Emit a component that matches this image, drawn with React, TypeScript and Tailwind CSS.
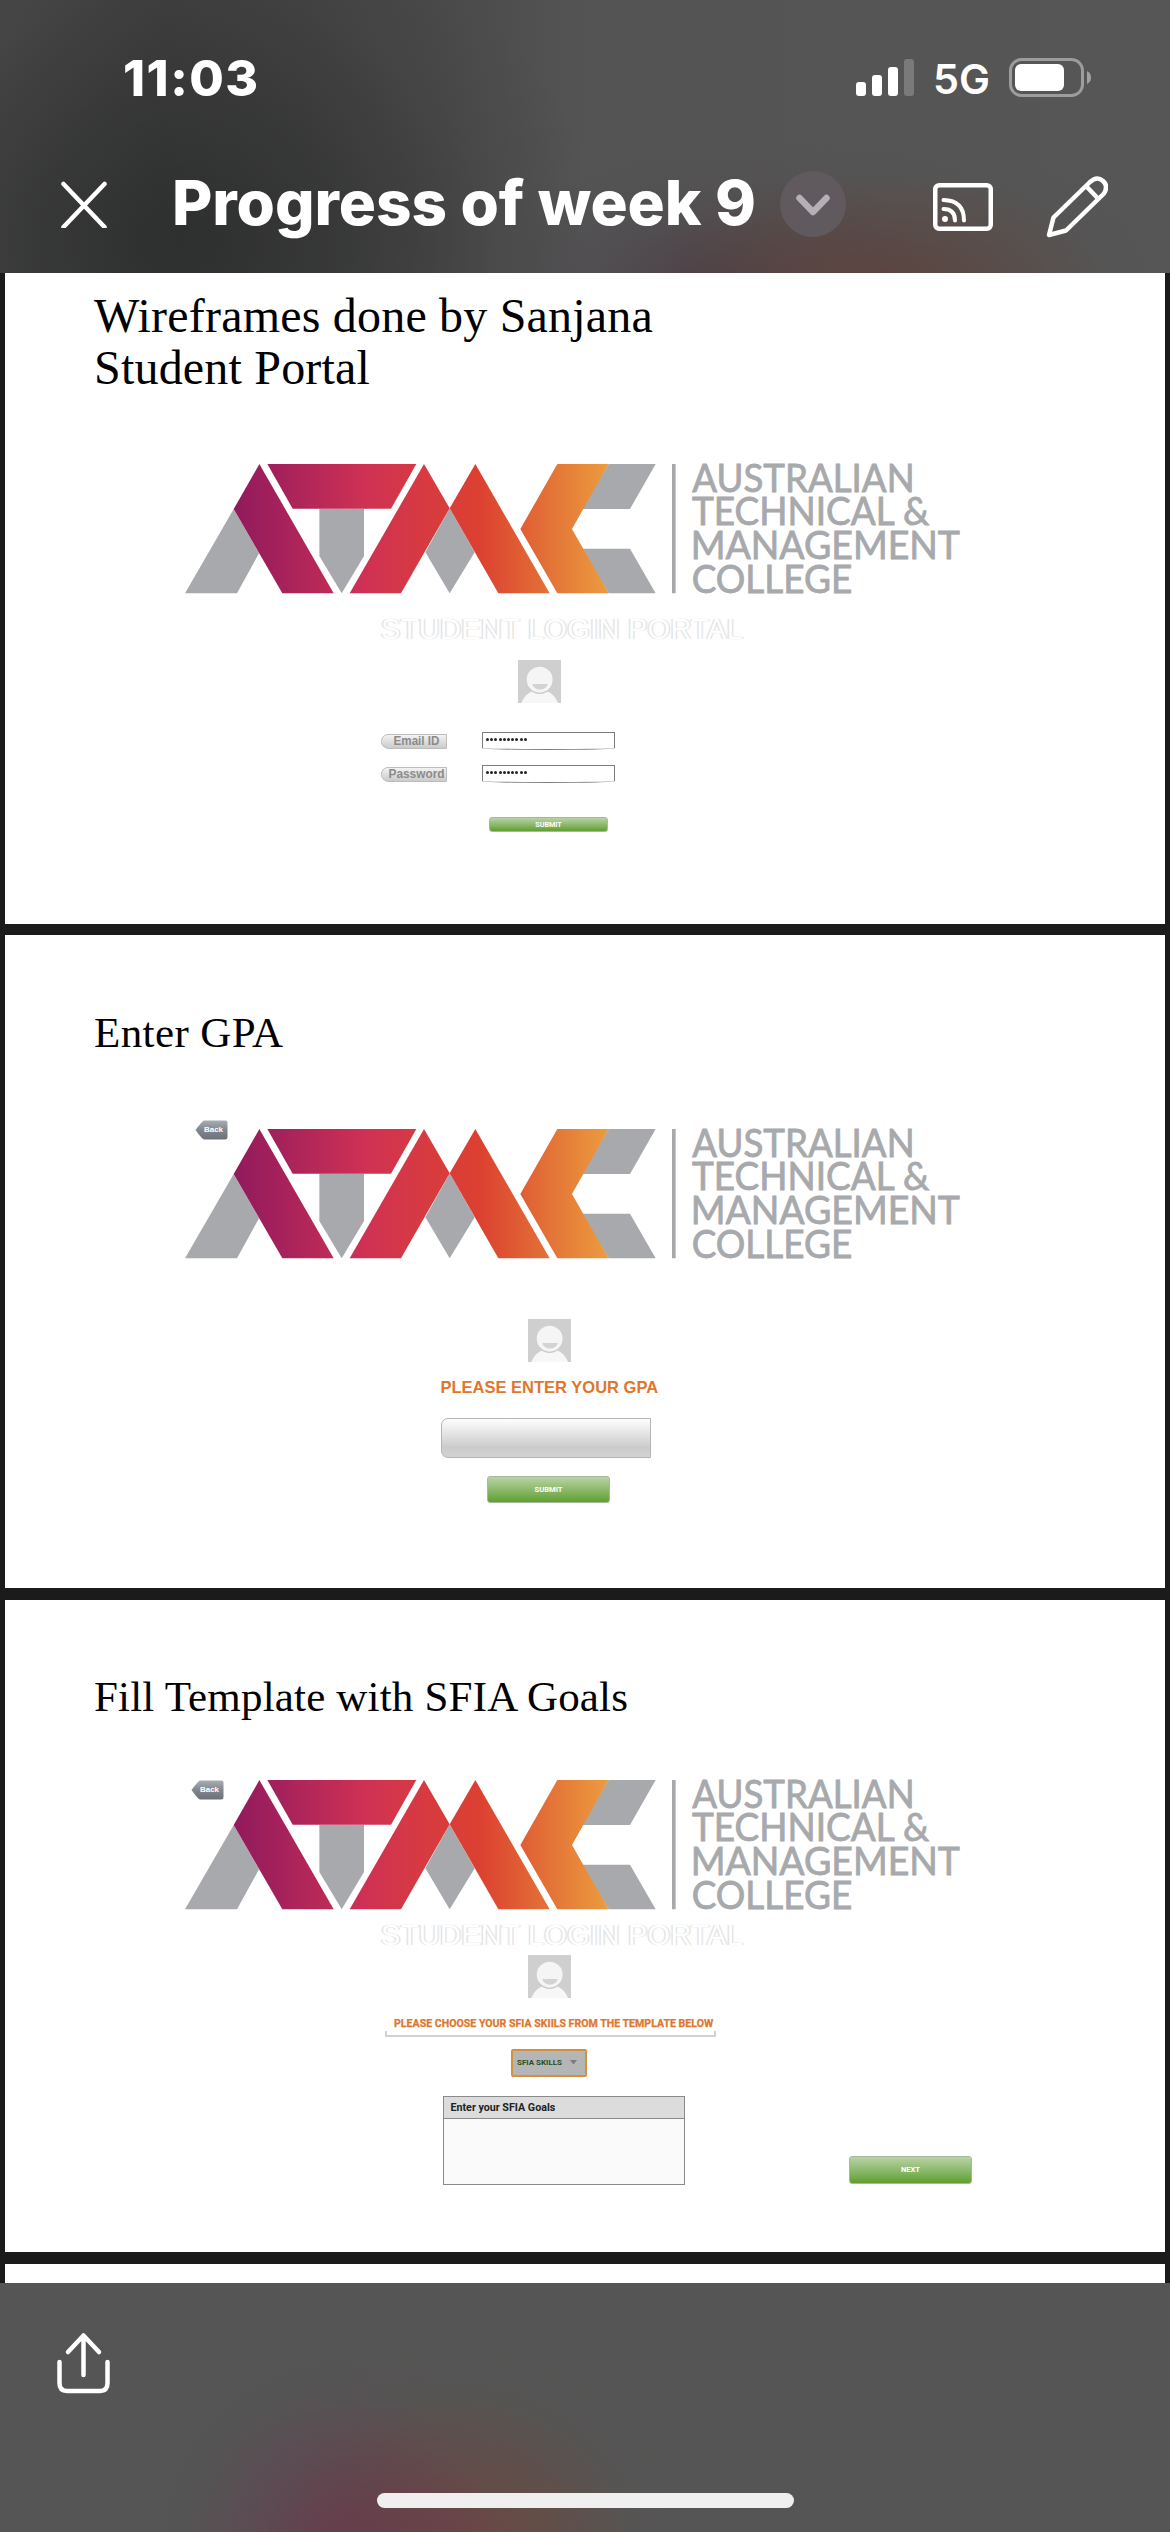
import React from "react";

const grey = "#a7a9ac";

function Logo({ id }: { id: string }) {
  const fill = `url(#${id})`;
  return (
    <svg className="block h-[131.67px] w-[780px] overflow-visible" viewBox="0 0 2340 395">
      <defs>
        <linearGradient id={id} gradientUnits="userSpaceOnUse" x1="146" y1="0" x2="1271" y2="0">
          <stop offset="0" stopColor="#911a5b" />
          <stop offset="0.13" stopColor="#a6225b" />
          <stop offset="0.35" stopColor="#cf3154" />
          <stop offset="0.48" stopColor="#d63944" />
          <stop offset="0.655" stopColor="#dc4030" />
          <stop offset="0.84" stopColor="#e37237" />
          <stop offset="1" stopColor="#ec9c3e" />
        </linearGradient>
      </defs>
      <g fill={grey}>
        <path d="M0 388 146 135 222 268 156 388Z" />
        <path d="M403 134H537V276L470 388 403 276Z" />
        <path d="M794 133 869 265 794 388 721 265Z" />
        <path d="M1271 0H1412L1335 135H1190Z" />
        <path d="M1190 254H1335L1412 388H1271Z" />
        <path d="M1461 0h11v388h-11z" />
      </g>
      <g fill={fill}>
        <path d="M223 0 446 388H292L146 135Z" />
        <path d="M247 0H694L618 134H323Z" />
        <path d="M494 388 717 0 794 133 648 388Z" />
        <path d="M871 0 1094 388H940L794 133Z" />
        <path d="M1117 0H1271L1161 195 1271 388H1117L1006 195Z" />
      </g>
      <g fill={grey} stroke={grey} strokeWidth="2.500" fontFamily="Lato, sans-serif" fontSize="115">
        <text x="1522" y="83" textLength="667" lengthAdjust="spacingAndGlyphs">AUSTRALIAN</text>
        <text x="1521" y="184" textLength="712" lengthAdjust="spacingAndGlyphs">TECHNICAL &amp;</text>
        <text x="1517" y="286" textLength="808" lengthAdjust="spacingAndGlyphs">MANAGEMENT</text>
        <text x="1520" y="387" textLength="482" lengthAdjust="spacingAndGlyphs">COLLEGE</text>
      </g>
    </svg>
  );
}

function Avatar() {
  return (
    <svg className="block size-[43px]" viewBox="0 0 129 129">
      <rect width="129" height="129" fill="#cfcfcf" />
      <path d="M10 129C20 104 38 91 65 91s45 13 55 38Z" fill="#f7f7f7" />
      <circle cx="65" cy="62" r="40" fill="#c9c9c9" />
      <circle cx="65" cy="59" r="39" fill="#f5f5f5" />
      <path d="M43 72H89C85 94 47 94 43 72Z" fill="#d3d3d3" />
    </svg>
  );
}

function BackButton() {
  return (
    <span className="relative flex h-[20px] w-[33px] items-center justify-center pl-[4px]">
      <svg className="absolute inset-0" width="33" height="20" viewBox="0 0 33 20">
        <defs>
          <linearGradient id="back" x1="0" y1="0" x2="0" y2="1">
            <stop offset="0" stopColor="#a9adb3" />
            <stop offset="0.5" stopColor="#82878f" />
            <stop offset="1" stopColor="#6b7079" />
          </linearGradient>
        </defs>
        <path d="M9 .5H30.5a2 2 0 0 1 2 2V17a2.500 2.500 0 0 1-2 2.500H9Q7 19 .5 10 7 1 9 .5Z" fill="url(#back)" />
      </svg>
      <span className="relative font-['Liberation_Sans'] text-[8px] leading-[10px] font-bold text-white">Back</span>
    </span>
  );
}

function PortalHeading() {
  return (
    <p className="font-['Liberation_Sans'] text-[29px] leading-[29px] tracking-[0.3px] whitespace-nowrap text-white [text-shadow:-1.500px_0_1px_#e2e2e2,1.500px_0_1px_#e2e2e2]">
      STUDENT LOGIN PORTAL
    </p>
  );
}

function Label({ children, textWidth }: { children: string; textWidth: number }) {
  return (
    <svg className="block h-[17px] w-[66px] overflow-visible" viewBox="0 0 66 17">
      <defs>
        <linearGradient id="label" x1="0" y1="0" x2="0" y2="1">
          <stop offset="0" stopColor="#f4f4f4" />
          <stop offset="1" stopColor="#c9c9c9" />
        </linearGradient>
      </defs>
      <path d="M6 1.500H65.500V15.500H7Q.5 14 .5 8.500T6 1.500Z" fill="url(#label)" stroke="#bdbdbd" />
      <text
        x="35.500"
        y="12"
        textAnchor="middle"
        textLength={textWidth}
        lengthAdjust="spacingAndGlyphs"
        fontFamily="Liberation Sans, sans-serif"
        fontWeight="700"
        fontSize="12"
        fill="#8b8b8b"
      >
        {children}
      </text>
    </svg>
  );
}

function LoginRow({ label, textWidth }: { label: string; textWidth: number }) {
  return (
    <div className="flex h-[18px] w-[234px] items-center justify-between">
      <Label textWidth={textWidth}>{label}</Label>
      <div className="flex h-[18px] w-[133px] items-center rounded-b-[50%_2px] border-[1.500px] border-[#7c7c7c] bg-white pb-[4px] pl-[3px]">
        <div className="flex gap-[1.2px]">
          {Array.from({ length: 10 }, (_, i) => (
            <span key={i} className="size-[3px] rounded-full bg-[#222]" />
          ))}
        </div>
      </div>
    </div>
  );
}

function GreenButton({ children, className }: { children: string; className: string }) {
  return (
    <div
      className={`flex items-center justify-center rounded-[3px] border border-[#a9b8a0] bg-linear-to-b from-[#b9d3a4] to-[#5fa02c] font-['Roboto'] leading-[10px] font-bold text-white ${className}`}
    >
      {children}
    </div>
  );
}

function Header() {
  return (
    <header className="h-[273px] shrink-0 bg-[radial-gradient(ellipse_300px_150px_at_870px_290px,rgba(94,64,58,0.85)_0%,rgba(92,68,62,0.5)_45%,rgba(86,80,78,0.15)_80%,transparent_100%),radial-gradient(ellipse_220px_140px_at_715px_290px,rgba(70,58,72,0.9)_0%,rgba(76,70,78,0.4)_55%,transparent_100%),radial-gradient(ellipse_420px_330px_at_180px_240px,rgba(40,41,41,0.75)_0%,rgba(42,43,43,0.5)_35%,rgba(52,52,52,0.15)_75%,transparent_100%),linear-gradient(90deg,#484848_0%,#3f3f3f_14%,#434343_26%,#4a4a4a_38%,#545454_50%,#565656_100%)] text-white">
      <div className="flex h-[156px] items-end justify-between pr-[79px] pl-[123px]">
        <div className="mb-[48px] font-['Inter'] text-[50px] leading-[60px] font-extrabold tracking-[1.5px]">11:03</div>
        <svg className="mb-[54px] block h-[50px] w-[236px] overflow-visible" viewBox="855 52 236 50">
          <g fill="#fff">
            <rect x="856" y="82" width="10" height="14" rx="3" />
            <rect x="872" y="75" width="10" height="21" rx="3" />
            <rect x="888" y="67" width="10" height="29" rx="3" />
            <rect x="904" y="59" width="10" height="37" rx="3" opacity=".22" />
            <text x="933" y="94" fontFamily="Inter, sans-serif" fontWeight="600" fontSize="41.500" textLength="57" lengthAdjust="spacingAndGlyphs">5G</text>
            <rect x="1015" y="64" width="49" height="27" rx="6" />
            <path d="M1087 71q4 2 4 6.500t-4 6.500z" opacity=".45" />
          </g>
          <rect x="1010.500" y="59.500" width="72" height="36" rx="11" fill="none" stroke="#fff" strokeWidth="3" opacity=".42" />
        </svg>
      </div>
      <div className="flex h-[96px] items-center pr-[62px] pl-[60px]">
        <svg className="block size-[48px]" viewBox="0 0 48 48" fill="none" stroke="#fff" strokeWidth="4.500" strokeLinecap="round">
          <path d="M3.500 4 44.500 47M44.500 4 3.500 47" />
        </svg>
        <h1 className="mb-[3px] ml-[64px] w-[586px] font-['Inter'] text-[62px] leading-[80px] font-extrabold tracking-[-0.05px] whitespace-nowrap">
          Progress of week 9
        </h1>
        <div className="ml-[22px] flex size-[66px] items-center justify-center rounded-full bg-[#605a5e]">
          <svg className="mt-[4px] block" width="36" height="24" viewBox="0 0 36 24" fill="none" stroke="#b3b0b8" strokeWidth="6.500" strokeLinecap="round" strokeLinejoin="round">
            <path d="M4.500 4 18 18 31.500 4" />
          </svg>
        </div>
        <svg className="mt-[6px] ml-[87px] block" width="60" height="48" viewBox="0 0 60 48" fill="none" stroke="#fff" strokeWidth="4.500" strokeLinecap="round">
          <rect x="2.250" y="2.250" width="55.500" height="43.500" rx="4" />
          <path d="M10.500 17Q31 17.500 31 37.500M10.500 26Q22 26 22 37.500" strokeWidth="4" />
          <circle cx="12" cy="36" r="3" fill="#fff" stroke="none" />
        </svg>
        <svg className="mt-[6px] ml-auto block" width="62" height="62" viewBox="0 0 62 62" fill="none" stroke="#fff" strokeWidth="4.500" strokeLinejoin="round">
          <path d="M3 59 7.500 41.500 44 6Q51-.5 57 5T57.500 18L20 54.500ZM40 10 52.500 23" />
        </svg>
      </div>
    </header>
  );
}

export default function App() {
  return (
    <main className="flex h-[2532px] w-[1170px] flex-col overflow-hidden bg-[#1b1b1c]">
      <Header />
      <div className="flex h-[2010px] flex-col overflow-hidden px-[5px]">
        <section className="flex h-[651px] shrink-0 flex-col items-start bg-white pt-[17px]">
          <h2 className="ml-[89px] font-['Liberation_Serif'] text-[48px] leading-[52px] tracking-[0.2px] whitespace-nowrap text-black">
            Wireframes done by Sanjana
            <br />
            Student Portal
          </h2>
          <div className="mt-[70.33px] ml-[180.33px]"><Logo id="logo-login" /></div>
          <div className="mt-[19px] ml-[376px]"><PortalHeading /></div>
          <div className="mt-[16.500px] ml-[513px]"><Avatar /></div>
          <div className="mt-[29px] ml-[376px] flex flex-col gap-[15px]">
            <LoginRow label="Email ID" textWidth={46} />
            <LoginRow label="Password" textWidth={56} />
          </div>
          <GreenButton className="mt-[34px] ml-[484px] h-[15px] w-[119px] text-[7.2px]">SUBMIT</GreenButton>
        </section>

        <section className="mt-[11px] flex h-[653px] shrink-0 flex-col items-start bg-white pt-[74px]">
          <h2 className="ml-[89px] font-['Liberation_Serif'] text-[43px] leading-[48px] tracking-[0.4px] whitespace-nowrap text-black">Enter GPA</h2>
          <div className="relative mt-[71.67px] ml-[180.33px]">
            <Logo id="logo-gpa" />
            <div className="absolute top-[-9px] left-[9.67px]"><BackButton /></div>
          </div>
          <div className="mt-[58.67px] ml-[522.5px]"><Avatar /></div>
          <p className="mt-[15.500px] ml-[435.500px] font-['Liberation_Sans'] text-[16.500px] leading-[20px] font-bold whitespace-nowrap text-[#e0762c]">
            PLEASE ENTER YOUR GPA
          </p>
          <div className="mt-[20.700px] ml-[436px] h-[40px] w-[210px] rounded-l-[7px] border border-[#b5b5b5] bg-[linear-gradient(#fbfbfb_5%,#cbcbcb_75%,#d3d3d3)]" />
          <GreenButton className="mt-[18px] ml-[482px] h-[27px] w-[123px] text-[7.6px]">SUBMIT</GreenButton>
        </section>

        <section className="mt-[12px] flex h-[652px] shrink-0 flex-col items-start bg-white pt-[72.500px]">
          <h2 className="ml-[89px] font-['Liberation_Serif'] text-[43px] leading-[48px] tracking-[0.18px] whitespace-nowrap text-black">Fill Template with SFIA Goals</h2>
          <div className="relative mt-[59.200px] ml-[180.33px]">
            <Logo id="logo-sfia" />
            <div className="absolute top-0 left-[5.67px]"><BackButton /></div>
          </div>
          <div className="mt-[9.800px] ml-[376px]"><PortalHeading /></div>
          <div className="mt-[5px] ml-[523px]"><Avatar /></div>
          <p className="mt-[16.500px] ml-[380px] flex h-[22px] w-[331px] items-center pb-[3px] pl-[9px] font-['Roboto'] text-[10.6px] leading-[14px] font-bold whitespace-nowrap text-[#e0762c] [-webkit-text-stroke:0.25px_#e0762c] [background:linear-gradient(#ced3d6,#ced3d6)_0_100%/100%_2px_no-repeat,linear-gradient(#ced3d6,#ced3d6)_0_100%/2px_6px_no-repeat,linear-gradient(#ced3d6,#ced3d6)_100%_100%/2px_6px_no-repeat]">
            PLEASE CHOOSE YOUR SFIA SKIILS FROM THE TEMPLATE BELOW
          </p>
          <div className="mt-[12px] ml-[506px] flex h-[28px] w-[76px] items-center rounded-[2px] border-2 border-[#d3903f] bg-[#b5b5b5] pl-[4px] font-['Roboto'] text-[8px] leading-[10px] font-bold whitespace-nowrap text-[#235023]">
            SFIA SKILLS
            <svg className="ml-[8px]" width="7" height="5" viewBox="0 0 7 5"><path d="M0 0H7L3.500 4.500Z" fill="#7c7c7c" /></svg>
          </div>
          <div className="mt-[19.700px] ml-[437.500px] flex h-[89px] w-[242px] flex-col border-[1.500px] border-[#8a8a8a] bg-[#fafafa]">
            <div className="flex h-[21.500px] shrink-0 items-center border-b border-[#8a8a8a] bg-[#dcdcdc] pl-[7px] font-['Roboto'] text-[10.7px] font-bold text-[#222]">
              Enter your SFIA Goals
            </div>
          </div>
          <GreenButton className="mt-[-29.500px] ml-[844px] h-[28px] w-[123px] text-[7.6px]">NEXT</GreenButton>
        </section>
        <section className="mt-[12px] h-[80px] shrink-0 bg-white" />
      </div>
      <footer className="flex h-[249px] shrink-0 flex-col justify-between bg-[#555] bg-[radial-gradient(ellipse_190px_200px_at_345px_270px,rgba(106,54,78,0.75)_0%,rgba(100,60,80,0.45)_45%,rgba(90,76,84,0.15)_80%,transparent_100%),radial-gradient(ellipse_240px_210px_at_450px_270px,rgba(122,62,58,0.8)_0%,rgba(112,70,58,0.5)_40%,rgba(92,82,76,0.18)_75%,transparent_100%)] pt-[48px] pb-[24px]">
        <svg className="ml-[56px] block" width="56" height="64" viewBox="0 0 56 64" fill="none" stroke="#fff" strokeWidth="4.500" strokeLinecap="round" strokeLinejoin="round">
          <path d="M27.500 5V44M12 21 27.500 4.500 43 21M3.500 31V52Q3.500 60 11 60H44Q51.500 60 51.500 52V31" />
        </svg>
        <div className="h-[15px] w-[417px] self-center rounded-full bg-[#efefef]" />
      </footer>
    </main>
  );
}
